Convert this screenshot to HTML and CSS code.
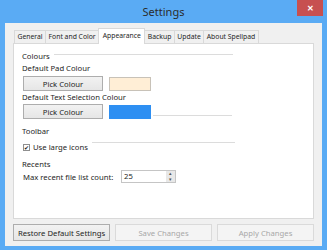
FILE: index.html
```html
<!DOCTYPE html>
<html lang="en">
<head>
    <meta charset="UTF-8">
    <title>Settings</title>
    <link rel="stylesheet" href="styles.css">
</head>
<body>
    <div class="window">
        <div class="titlebar">
            <span class="title">Settings</span>
            <button class="close-btn">&#x2715;</button>
        </div>

        <div class="client">
            <div class="tabs">
                <div class="tab">General</div>
                <div class="tab">Font and Color</div>
                <div class="tab active">Appearance</div>
                <div class="tab">Backup</div>
                <div class="tab">Update</div>
                <div class="tab">About Spellpad</div>
            </div>

            <div class="panel">
                <div class="group-head">
                    <span>Colours</span>
                    <div class="rule"></div>
                </div>

                <div class="label first">Default Pad Colour</div>
                <div class="row">
                    <button class="btn pick">Pick Colour</button>
                    <div class="swatch pad"></div>
                </div>

                <div class="label">Default Text Selection Colour</div>
                <div class="row tight">
                    <button class="btn pick">Pick Colour</button>
                    <div class="swatch selection"></div>
                    <div class="rule low"></div>
                </div>

                <div class="group-title">Toolbar</div>
                <div class="row check-row">
                    <label class="check"><span class="box">&#x2714;</span>Use large icons</label>
                    <div class="rule high"></div>
                </div>

                <div class="group-title recents">Recents</div>
                <div class="row spin-row">
                    <span class="field-label">Max recent file list count:</span>
                    <div class="spin">
                        <span class="spin-value">25</span>
                        <div class="spin-arrows">
                            <span class="arrow">&#x25B4;</span>
                            <span class="arrow">&#x25BE;</span>
                        </div>
                    </div>
                </div>
            </div>

            <div class="actions">
                <button class="btn wide">Restore Default Settings</button>
                <button class="btn wide" disabled>Save Changes</button>
                <button class="btn wide" disabled>Apply Changes</button>
            </div>
        </div>
    </div>
</body>
</html>
```

FILE: styles.css
```css
body {
    margin: 0;
    font-family: "Noto Sans", "Open Sans", sans-serif;
    font-size: 7.7px;
    color: #1e1e1e;
    background: #5aabf4;
}
.window {
    width: 327px;
    height: 250px;
    display: flex;
    flex-direction: column;
}
.titlebar {
    height: 23px;
    display: flex;
    justify-content: center;
    position: relative;
}
.title {
    font-size: 11px;
    line-height: 24px;
    color: #2b2b2b;
}
.close-btn {
    position: absolute;
    top: 0;
    right: 4px;
    width: 26px;
    height: 16px;
    border: none;
    background: #c75050;
    color: #fff;
    font-size: 8px;
    font-weight: bold;
    padding: 0;
}
.client {
    margin: 0 5px 4px 5px;
    flex: 1;
    background: #f0f0f0;
    padding: 5px 0 0 8px;
    display: flex;
    flex-direction: column;
}
.tabs {
    display: flex;
    height: 15px;
    padding-left: 1px;
    align-items: flex-end;
    font-size: 6.8px;
}
.tab {
    height: 13px;
    line-height: 12px;
    padding: 0 2.5px;
    border: 1px solid #d9d9d9;
    border-bottom: none;
    margin-right: -1px;
    background: #f0f0f0;
    box-sizing: border-box;
}
.tab.active {
    height: 16px;
    background: #fff;
    margin-bottom: -1px;
    position: relative;
    line-height: 13px;
    padding: 0 3.5px;
}
.panel {
    width: 301px;
    height: 176px;
    box-sizing: border-box;
    border: 1px solid #d9d9d9;
    background: #fff;
    padding: 6px 0 0 8px;
}
.rule {
    height: 1px;
    background: #dcdcdc;
}
.group-head {
    display: flex;
    align-items: center;
    height: 11px;
}
.group-head .rule {
    width: 179px;
    margin-left: 4px;
    margin-top: -2px;
}
.label, .group-title {
    height: 11px;
    line-height: 11px;
    margin-top: 1px;
}
.label.first {
    margin-top: 2px;
}
.group-title {
    margin-top: 7px;
}
.group-title.recents {
    margin-top: 6px;
}
.row {
    display: flex;
    align-items: center;
    margin-top: 2px;
}
.row.tight {
    margin-top: 1px;
}
.btn {
    font: inherit;
    color: #1e1e1e;
    border: 1px solid #adadad;
    background: linear-gradient(#f2f2f2, #e6e6e6);
    padding: 0;
    box-sizing: border-box;
}
.btn.pick {
    width: 80px;
    height: 15px;
    margin-left: 1px;
}
.swatch {
    width: 42px;
    height: 14px;
    margin-left: 6px;
    box-sizing: border-box;
}
.swatch.pad {
    background: #ffeed6;
    border: 1px solid #c8c2b8;
}
.swatch.selection {
    background: #2e8ff2;
}
.rule.low {
    width: 79px;
    align-self: flex-end;
    margin: 0 0 3px 2px;
}
.check-row {
    margin-top: 5px;
    align-items: flex-start;
    height: 11px;
}
.check {
    display: flex;
    align-items: center;
    margin-left: 1px;
    line-height: 11px;
}
.box {
    width: 7px;
    height: 7px;
    border: 1px solid #8f8f8f;
    box-sizing: border-box;
    font-size: 6px;
    line-height: 6px;
    text-align: center;
    margin-right: 3px;
    color: #222;
}
.rule.high {
    width: 143px;
    margin-left: 4px;
}
.spin-row {
    margin-top: 0;
}
.field-label {
    margin-left: 1px;
    width: 98px;
}
.spin {
    width: 55px;
    height: 13px;
    border: 1px solid #c5c5c5;
    box-sizing: border-box;
    display: flex;
    justify-content: space-between;
}
.spin-value {
    padding-left: 2px;
    line-height: 11px;
}
.spin-arrows {
    width: 9px;
    display: flex;
    flex-direction: column;
    background: #e8e8e8;
}
.arrow {
    flex: 1;
    font-size: 5px;
    line-height: 5px;
    text-align: center;
    color: #555;
}
.actions {
    display: flex;
    gap: 5px;
    margin-top: 5px;
}
.btn.wide {
    width: 97px;
    height: 17px;
}
.btn.wide:disabled {
    background: #f4f4f4;
    border-color: #dadada;
    color: #a8a8a8;
}
```
